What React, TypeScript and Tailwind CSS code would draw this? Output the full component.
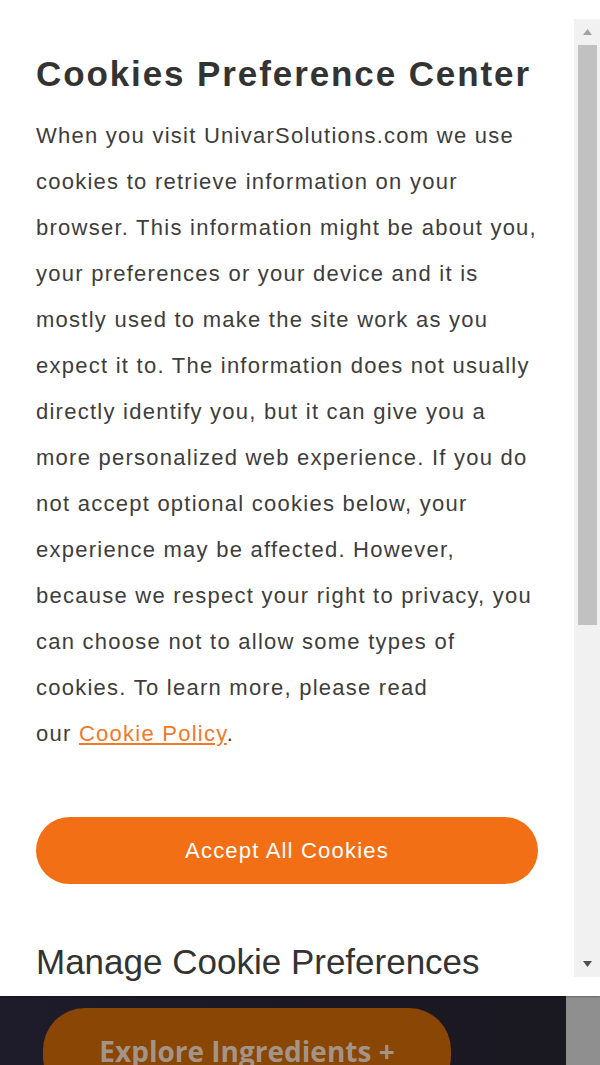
import React from "react";

const lines = [
  "When you visit UnivarSolutions.com we use",
  "cookies to retrieve information on your",
  "browser. This information might be about you,",
  "your preferences or your device and it is",
  "mostly used to make the site work as you",
  "expect it to. The information does not usually",
  "directly identify you, but it can give you a",
  "more personalized web experience. If you do",
  "not accept optional cookies below, your",
  "experience may be affected. However,",
  "because we respect your right to privacy, you",
  "can choose not to allow some types of",
  "cookies. To learn more, please read",
];

export default function App() {
  return (
    <div className="w-[600px] h-[1065px] overflow-hidden bg-[#1c1a24] flex flex-col" style={{ fontFamily: '"Liberation Sans", Arial, sans-serif' }}>
      <div className="h-[996px] shrink-0 bg-white flex shadow-[0_1px_2px_rgba(0,0,0,0.3)] relative z-10">
        <div className="flex-1 pl-[36px] pr-[36px] pt-[52px] flex flex-col">
          <h1 className="text-[35px] leading-[44px] font-bold text-[#333] tracking-[1.9px] whitespace-nowrap">
            Cookies Preference Center
          </h1>
          <div className="mt-[17px] text-[22px] leading-[46px] text-[#3d3d3d] tracking-[1.25px]">
            {lines.map((l) => (
              <div key={l} className="whitespace-nowrap">{l}</div>
            ))}
            <div className="whitespace-nowrap">
              our <a className="text-[#f07a2a] underline underline-offset-2">Cookie Policy</a>.
            </div>
          </div>
          <button className="mt-[60px] h-[67px] w-full rounded-full bg-[#f26f16] text-white text-[22px] tracking-[1.2px] shrink-0">
            Accept All Cookies
          </button>
          <h2 className="mt-[56px] text-[35px] leading-[44px] text-[#333] whitespace-nowrap">
            Manage Cookie Preferences
          </h2>
        </div>
        <div className="w-[26px] mt-[19px] mb-[19px] bg-[#f1f1f1] flex flex-col items-center">
          <div className="h-[26px] w-full flex items-center justify-center">
            <svg width="9" height="6" viewBox="0 0 9 6"><path d="M4.5 0 L9 6 L0 6 Z" fill="#a3a3a3" /></svg>
          </div>
          <div className="w-[19px] h-[580px] bg-[#c1c1c1]" />
          <div className="flex-1" />
          <div className="h-[26px] w-full flex items-center justify-center">
            <svg width="9" height="6" viewBox="0 0 9 6"><path d="M0 0 L9 0 L4.5 6 Z" fill="#505050" /></svg>
          </div>
        </div>
      </div>
      <div className="flex-1 flex overflow-hidden bg-gradient-to-r from-[#1e1c2a] via-[#1b1824] to-[#1a1820]">
        <div className="flex-1 pl-[43px] pt-[12px]">
          <div className="w-[408px] h-[90px] rounded-[42px] bg-[#8a4604] flex justify-center pt-[27px]">
            <span className="text-[28px] font-bold text-[#a39487] leading-[32px]" style={{ fontFamily: '"Open Sans", sans-serif' }}>
              Explore Ingredients +
            </span>
          </div>
        </div>
        <div className="w-[34px] bg-[#8f8f8f]" />
      </div>
    </div>
  );
}
